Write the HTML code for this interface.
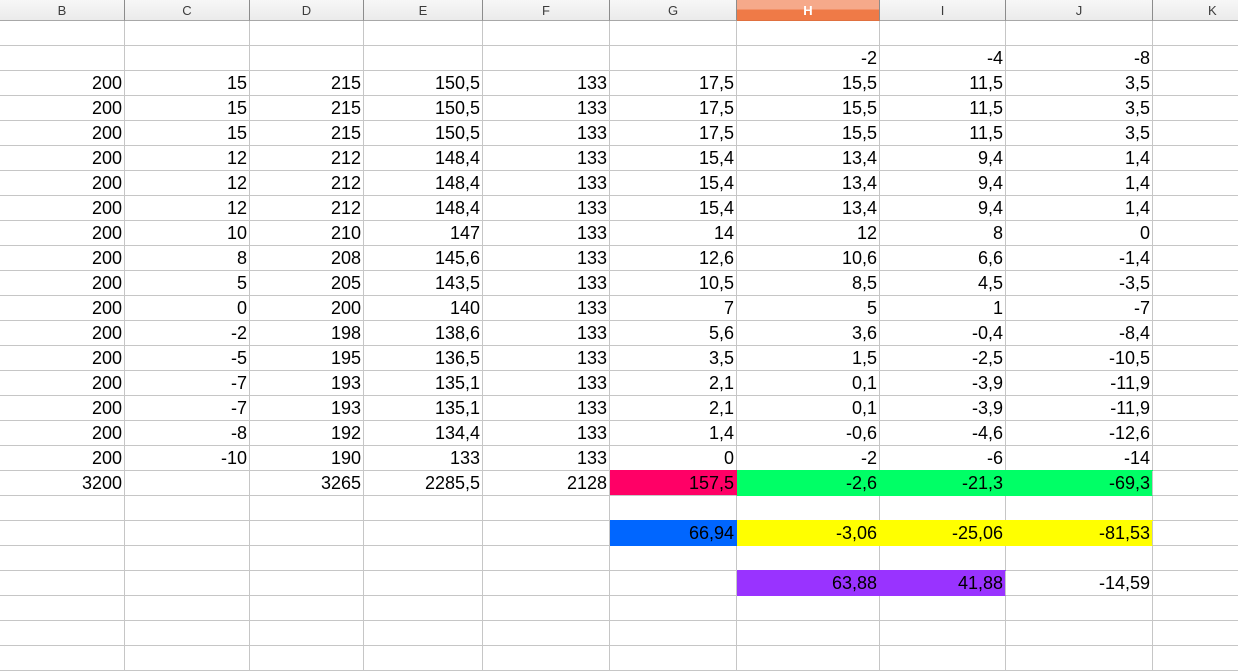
<!DOCTYPE html>
<html><head><meta charset="utf-8"><style>
*{margin:0;padding:0;box-sizing:border-box}
body{width:1238px;height:650px;overflow:hidden;background:#fff;font-family:"Liberation Sans",sans-serif}
.g{display:grid;grid-template-columns:125px 125px 114px 119px 127px 127px 143px 126px 147px 85px;grid-template-rows:21px;grid-auto-rows:25px;width:1238px}
.g>div{border-right:1px solid #c6c6c6;border-bottom:1px solid #c6c6c6;text-align:right;padding:0 2px 0 0;font-size:18px;line-height:24px;overflow:hidden;white-space:nowrap;color:#000}
.g>div.h{background:linear-gradient(#f7f7f7,#ebebeb);border-right:1px solid #8c8c8c;border-bottom:1px solid #a8a8a8;text-align:center;font-size:13px;line-height:18px;padding:2px 0 0 0;color:#3c3c3c}
.g>div.h.s{background:linear-gradient(#f6a98a 0,#f6a98a 45%,#ef7a47 50%,#ef7a47 100%);color:#fff;font-weight:bold;border-bottom-color:#e0703f}
.g>div.h.k{text-align:left;padding-left:55px;border-right:none}
.g>div.e{border-right:none}
.p{background:#ff0066;border-right-color:#ff0066!important;box-shadow:0 -1px 0 #ff0066}
.gr{background:#00ff66;border-right-color:#00ff66!important;border-bottom-color:#00ff66!important;box-shadow:0 -1px 0 #00ff66}
.b{background:#0066ff;border-right-color:#0066ff!important;border-bottom-color:#0066ff!important;box-shadow:0 -1px 0 #0066ff}
.y{background:#ffff00;border-right-color:#ffff00!important;border-bottom-color:#ffff00!important;box-shadow:0 -1px 0 #ffff00}
.v{background:#9933ff;border-right-color:#9933ff!important;border-bottom-color:#9933ff!important;box-shadow:0 -1px 0 #9933ff}
.g>div.l{border-right-color:#c6c6c6!important}
</style></head><body>
<div class="g">
<div class="h">B</div><div class="h">C</div><div class="h">D</div><div class="h">E</div><div class="h">F</div><div class="h">G</div><div class="h s">H</div><div class="h">I</div><div class="h">J</div><div class="h k">K</div>

<div></div><div></div><div></div><div></div><div></div><div></div><div></div><div></div><div></div><div class="e"></div>
<div></div><div></div><div></div><div></div><div></div><div></div><div>-2</div><div>-4</div><div>-8</div><div class="e"></div>

<div>200</div><div>15</div><div>215</div><div>150,5</div><div>133</div><div>17,5</div><div>15,5</div><div>11,5</div><div>3,5</div><div class="e"></div>
<div>200</div><div>15</div><div>215</div><div>150,5</div><div>133</div><div>17,5</div><div>15,5</div><div>11,5</div><div>3,5</div><div class="e"></div>
<div>200</div><div>15</div><div>215</div><div>150,5</div><div>133</div><div>17,5</div><div>15,5</div><div>11,5</div><div>3,5</div><div class="e"></div>
<div>200</div><div>12</div><div>212</div><div>148,4</div><div>133</div><div>15,4</div><div>13,4</div><div>9,4</div><div>1,4</div><div class="e"></div>
<div>200</div><div>12</div><div>212</div><div>148,4</div><div>133</div><div>15,4</div><div>13,4</div><div>9,4</div><div>1,4</div><div class="e"></div>
<div>200</div><div>12</div><div>212</div><div>148,4</div><div>133</div><div>15,4</div><div>13,4</div><div>9,4</div><div>1,4</div><div class="e"></div>
<div>200</div><div>10</div><div>210</div><div>147</div><div>133</div><div>14</div><div>12</div><div>8</div><div>0</div><div class="e"></div>
<div>200</div><div>8</div><div>208</div><div>145,6</div><div>133</div><div>12,6</div><div>10,6</div><div>6,6</div><div>-1,4</div><div class="e"></div>
<div>200</div><div>5</div><div>205</div><div>143,5</div><div>133</div><div>10,5</div><div>8,5</div><div>4,5</div><div>-3,5</div><div class="e"></div>
<div>200</div><div>0</div><div>200</div><div>140</div><div>133</div><div>7</div><div>5</div><div>1</div><div>-7</div><div class="e"></div>
<div>200</div><div>-2</div><div>198</div><div>138,6</div><div>133</div><div>5,6</div><div>3,6</div><div>-0,4</div><div>-8,4</div><div class="e"></div>
<div>200</div><div>-5</div><div>195</div><div>136,5</div><div>133</div><div>3,5</div><div>1,5</div><div>-2,5</div><div>-10,5</div><div class="e"></div>
<div>200</div><div>-7</div><div>193</div><div>135,1</div><div>133</div><div>2,1</div><div>0,1</div><div>-3,9</div><div>-11,9</div><div class="e"></div>
<div>200</div><div>-7</div><div>193</div><div>135,1</div><div>133</div><div>2,1</div><div>0,1</div><div>-3,9</div><div>-11,9</div><div class="e"></div>
<div>200</div><div>-8</div><div>192</div><div>134,4</div><div>133</div><div>1,4</div><div>-0,6</div><div>-4,6</div><div>-12,6</div><div class="e"></div>
<div>200</div><div>-10</div><div>190</div><div>133</div><div>133</div><div>0</div><div>-2</div><div>-6</div><div>-14</div><div class="e"></div>

<div>3200</div><div></div><div>3265</div><div>2285,5</div><div>2128</div><div class="p" style="border-bottom-color:#c6c6c6">157,5</div><div class="gr">-2,6</div><div class="gr">-21,3</div><div class="gr l">-69,3</div><div class="e"></div>
<div></div><div></div><div></div><div></div><div></div><div></div><div></div><div></div><div></div><div class="e"></div>
<div></div><div></div><div></div><div></div><div></div><div class="b">66,94</div><div class="y">-3,06</div><div class="y">-25,06</div><div class="y l">-81,53</div><div class="e"></div>
<div></div><div></div><div></div><div></div><div></div><div></div><div></div><div></div><div></div><div class="e"></div>
<div></div><div></div><div></div><div></div><div></div><div></div><div class="v">63,88</div><div class="v l">41,88</div><div>-14,59</div><div class="e"></div>
<div></div><div></div><div></div><div></div><div></div><div></div><div></div><div></div><div></div><div class="e"></div>
<div></div><div></div><div></div><div></div><div></div><div></div><div></div><div></div><div></div><div class="e"></div>
<div></div><div></div><div></div><div></div><div></div><div></div><div></div><div></div><div></div><div class="e"></div>
</div>
</body></html>
